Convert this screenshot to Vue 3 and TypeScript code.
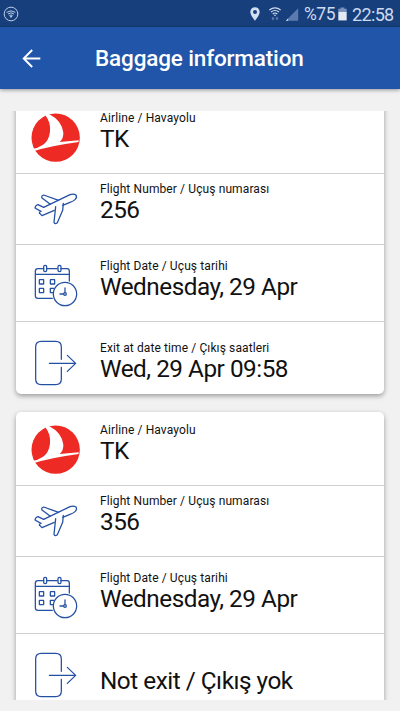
<script setup lang="ts">
type RowKind = 'airline' | 'flight' | 'date' | 'exit'

interface Row {
  kind: RowKind
  label: string
  value: string
}

const rowsFor = (flight: string, exit: Row): Row[] => [
  { kind: 'airline', label: 'Airline / Havayolu', value: 'TK' },
  { kind: 'flight', label: 'Flight Number / Uçuş numarası', value: flight },
  { kind: 'date', label: 'Flight Date / Uçuş tarihi', value: 'Wednesday, 29 Apr' },
  exit,
]

const cards: Row[][] = [
  rowsFor('256', { kind: 'exit', label: 'Exit at date time / Çıkış saatleri', value: 'Wed, 29 Apr 09:58' }),
  rowsFor('356', { kind: 'exit', label: '', value: 'Not exit / Çıkış yok' }),
]
</script>

<template>
  <div class="screen">
    <div class="status">
      <svg class="hotspot" viewBox="0 0 48 48">
        <g fill="none" stroke="#bccde8" stroke-width="3">
          <circle cx="24" cy="24" r="20.5" />
          <path d="M11 19q13-9 26 0M15 24q9-7 18 0M19 29q5-4 10 0" />
        </g>
        <path d="M20 30h8l-4 6z" fill="#bccde8" />
      </svg>
      <div class="status-right">
        <svg class="pin" viewBox="0 0 30 42">
          <path fill-rule="evenodd" fill="#d3def0" d="M15 1C7 1 1 7 1 15c0 10 14 26 14 26s14-16 14-26C29 7 23 1 15 1zm0 8a6 6 0 1 1 0 12 6 6 0 0 1 0-12z" />
        </svg>
        <svg class="wifi" viewBox="0 0 36 42">
          <g fill="none" stroke="#d3def0" stroke-width="3.4">
            <path d="M1 9q17-13 34 0M6 15q12-9 24 0M11 21q7-6 14 0" />
          </g>
          <path d="M14 23h8l-4 5z" fill="#d3def0" />
          <path d="M12 29l5 6h-3v5h-4v-5H7zM24 40l-5-6h3v-5h4v5h3z" fill="#6480b2" />
        </svg>
        <svg class="signal" viewBox="0 0 40 40">
          <path d="M39 1v38H1z" fill="#5b7bb0" />
          <path d="M8 32v7H1z" fill="#d3def0" />
        </svg>
        <span class="percent">%75</span>
        <svg class="battery" viewBox="0 0 28 42">
          <path d="M8 1h12v4h7v9H1V5h7z" fill="#7891bd" />
          <path d="M1 14h26v27H1z" fill="#e2e9f5" />
        </svg>
        <span class="clock">22:58</span>
      </div>
    </div>
    <header class="bar">
      <svg class="back" viewBox="0 0 56 56">
        <path d="M54 28H5M30 3L5 28l25 25" fill="none" stroke="#fff" stroke-width="5.6" />
      </svg>
      <h1>Baggage information</h1>
    </header>
    <main class="list">
      <section v-for="(rows, i) in cards" :key="i" class="card">
        <div v-for="row in rows" :key="row.kind" class="row" :class="row.kind">
          <svg v-if="row.kind === 'airline'" class="icon" viewBox="60 36 156 156">
            <circle cx="137" cy="113" r="72.5" fill="#ee2a24" />
            <path d="M106 46Q123 68 120 95Q117 122 98 135Q85 144 64 148L70 154Q118 138 206 126L206 121L149 126Q161 115 160 98Q156 62 117 42Z" fill="#fff" />
          </svg>
          <svg v-else-if="row.kind === 'flight'" class="icon" viewBox="60 30 156 108">
            <g class="line">
              <path d="M101 82L84 74Q77 75 75 84L93 94Q87 96 88 99L96 107L133 91" />
              <path d="M101 82L180 44Q191 40 198 45Q202 52 195 59Q190 64 180 67L158 76" />
              <path d="M121 73L96 54Q93 47 101 45L146 61" />
              <path d="M137 80L132 127Q134 134 142 128L158 91L160 70" />
            </g>
          </svg>
          <svg v-else-if="row.kind === 'date'" class="icon" viewBox="60 36 156 138">
            <g class="line">
              <path d="M101 56H84Q76 56 76 64V137Q76 145 84 145H127M111 56H142M153 56H171Q178 56 178 64V93M76 73H178" />
              <rect x="101" y="46" width="9" height="19" rx="4" />
              <rect x="144" y="46" width="9" height="19" rx="4" />
              <rect x="88" y="89" width="13" height="13" rx="1" />
              <rect x="121" y="89" width="13" height="13" rx="1" />
              <rect x="88" y="115" width="13" height="13" rx="1" />
              <path d="M131 115H121V128H129" />
              <circle cx="165" cy="132" r="35" />
              <circle cx="165" cy="132" r="4" />
              <path d="M165 128V114M161 132H150" />
            </g>
          </svg>
          <svg v-else class="icon" viewBox="60 42 156 144">
            <g class="line">
              <path d="M154 103V66Q154 49 137 49H94Q77 49 77 66V163Q77 179 94 179H137Q154 179 154 163V127" />
              <path d="M118 115H197M172 91L197 115L172 139" />
            </g>
          </svg>
          <div class="text">
            <div class="label">{{ row.label }}</div>
            <div class="value">{{ row.value }}</div>
          </div>
        </div>
      </section>
    </main>
  </div>
</template>

<style>
body {
  background: #f1f1f1;
}
</style>

<style scoped>
.screen {
  height: 711px;
  overflow: hidden;
  display: flex;
  flex-direction: column;
  font-family: Roboto, sans-serif;
  background: #f1f1f1;
  box-sizing: border-box;
  padding-bottom: 11px;
}
.status {
  height: 27px;
  flex: none;
  box-sizing: border-box;
  background: #173f7c;
  display: flex;
  justify-content: space-between;
  align-items: flex-start;
  padding: 6px 6px 0 3px;
}
.hotspot {
  width: 16px;
  height: 16px;
}
.status-right {
  display: flex;
  align-items: flex-start;
  color: #cddaf0;
  font-size: 18px;
  line-height: 17px;
}
.pin {
  width: 10px;
  height: 14px;
  margin: 1px 9px 0 0;
}
.wifi {
  width: 12px;
  height: 14px;
  margin: 1px 4px 0 0;
}
.signal {
  width: 14px;
  height: 13px;
  margin: 2px 5px 0 0;
}
.percent {
  width: 34px;
  font-size: 17.5px;
  letter-spacing: -0.5px;
}
.battery {
  width: 9px;
  height: 14px;
  margin: 1px 5px 0 0;
}
.clock {
  width: 42px;
  letter-spacing: -0.65px;
}
.bar {
  height: 62px;
  flex: none;
  box-sizing: border-box;
  background: #2055a9;
  box-shadow: 0 1px 4px rgba(0, 0, 0, 0.4);
  display: flex;
  align-items: center;
  padding-left: 22px;
}
.back {
  width: 19px;
  height: 19px;
}
h1 {
  margin: 0 0 0 54px;
  color: #fff;
  font-size: 22.5px;
  font-weight: 500;
  line-height: 28px;
  letter-spacing: -0.15px;
  white-space: nowrap;
}
.list {
  margin-top: 22px;
  flex: 1;
  min-height: 0;
  overflow: hidden;
  padding: 0 16px;
}
.card {
  background: #fff;
  border-radius: 5px;
  box-shadow: 0 2px 5px rgba(0, 0, 0, 0.36);
  margin-bottom: 18px;
}
.card:first-child {
  margin-top: -11px;
}
.row {
  display: flex;
  align-items: flex-start;
  box-sizing: border-box;
  padding-left: 14px;
  border-bottom: 1px solid #cfcfcf;
}
.airline {
  height: 74px;
  --icon-top: 12px;
  --text-top: 11px;
}
.flight {
  height: 71px;
  --icon-top: 16px;
  --text-top: 8px;
}
.date {
  height: 77px;
  --icon-top: 17px;
  --text-top: 14px;
}
.exit {
  height: 72px;
  border-bottom: 0;
  --icon-top: 17px;
  --text-top: 19px;
}
.icon {
  width: 52px;
  flex: none;
  margin-top: var(--icon-top);
}
.line {
  fill: none;
  stroke: #2450a4;
  stroke-width: 3.8;
  stroke-linecap: round;
  stroke-linejoin: round;
}
.text {
  margin: var(--text-top) 0 0 18px;
  color: #111;
  white-space: nowrap;
}
.label {
  height: 14px;
  font-size: 12px;
  line-height: 14px;
  letter-spacing: 0.11px;
}
.value {
  font-size: 24.3px;
  line-height: 28px;
  letter-spacing: -0.48px;
}
</style>
